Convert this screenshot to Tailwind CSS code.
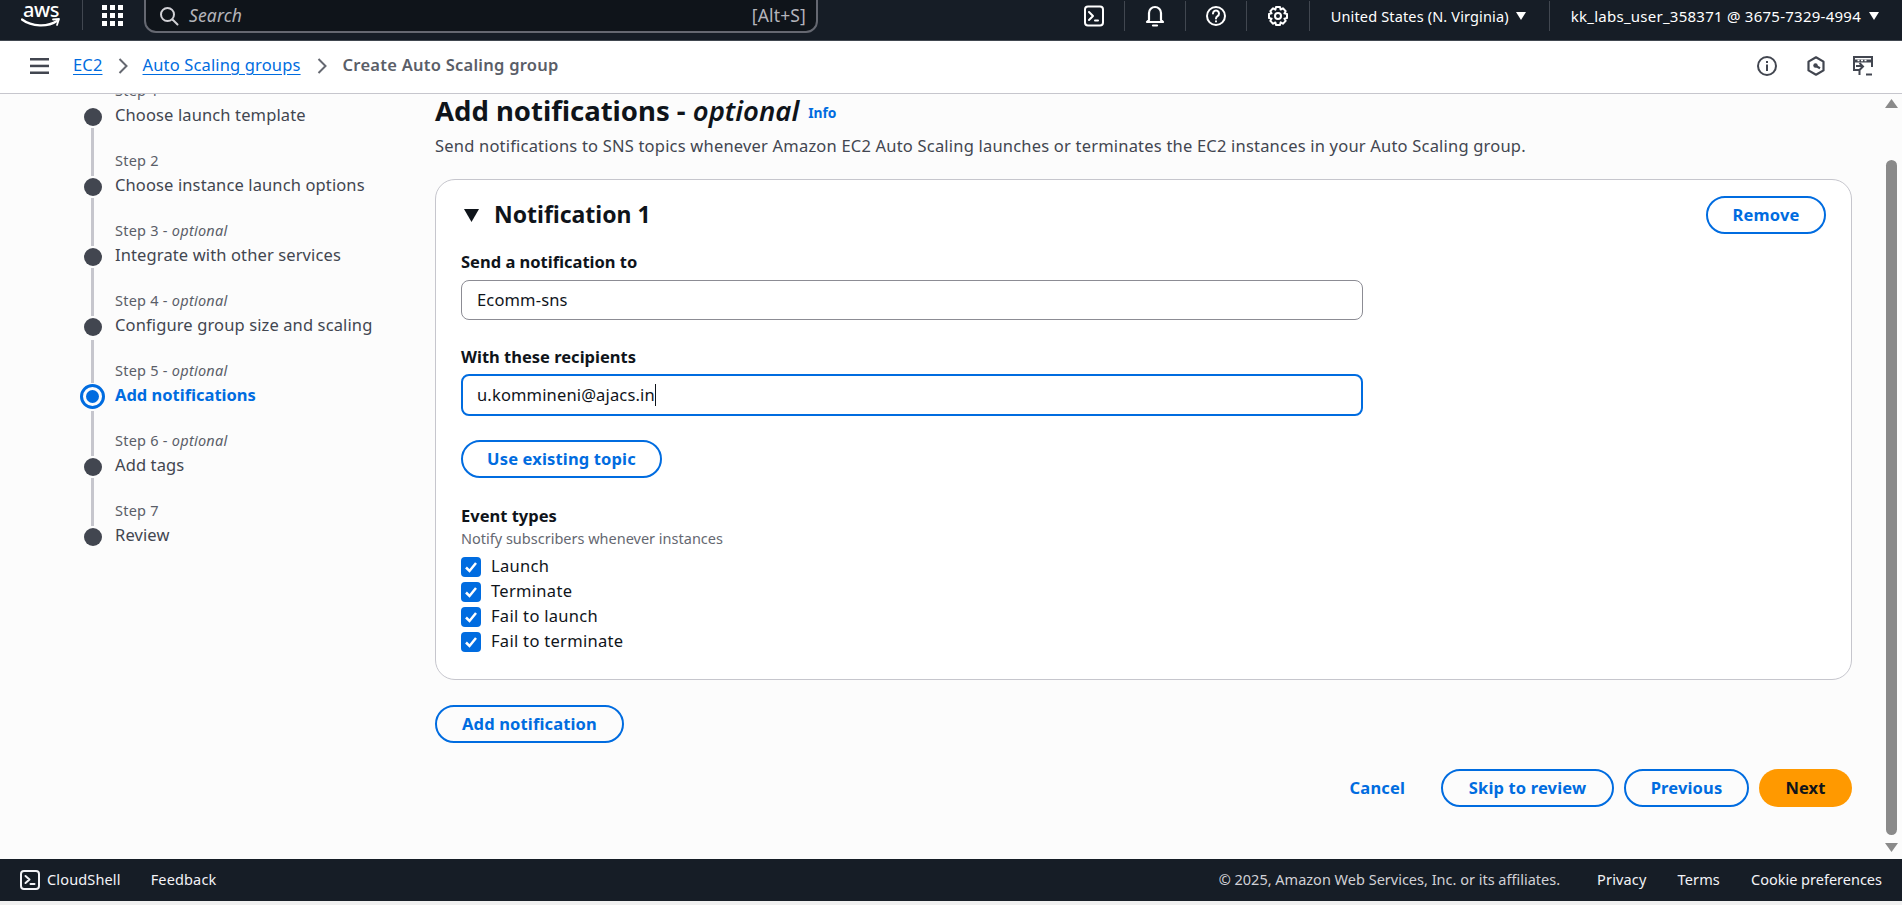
<!doctype html>
<html lang="en">
<head>
<meta charset="utf-8">
<title>Create Auto Scaling group</title>
<script src="https://cdn.jsdelivr.net/npm/@tailwindcss/browser@4"></script>
</head>
<body class="overflow-hidden">
<div class="flex h-[905px] flex-col bg-[#f0f0f0] font-['Noto_Sans',sans-serif] text-[16.5px] tracking-[0.15px] text-[#0f141a]">

  <!-- top nav -->
  <header class="flex h-[41px] shrink-0 items-start overflow-hidden border-b border-[#414750] bg-[#161d26] text-white">
    <div class="relative ml-[21px] h-[40px] w-[40px] shrink-0">
      <span class="block text-center text-[20px] font-medium leading-[20px] tracking-[-0.5px]">aws</span>
      <svg class="absolute left-0 top-[18px]" width="40" height="10" viewBox="0 0 40 10" fill="none"><path d="M1 1.500C11 9 27 9 36 3" stroke="#fff" stroke-width="2.200" stroke-linecap="round"/><path d="M32 1.500l6-.5-2 6" stroke="#fff" stroke-width="1.800" stroke-linecap="round" stroke-linejoin="round"/></svg>
    </div>
    <div class="ml-[21px] h-[30px] w-px bg-[#414750]"></div>
    <svg class="ml-[19px] mt-[5px] shrink-0" width="21" height="21" viewBox="0 0 21 21" fill="#fff"><rect width="5" height="5"/><rect x="8" width="5" height="5"/><rect x="16" width="5" height="5"/><rect y="8" width="5" height="5"/><rect x="8" y="8" width="5" height="5"/><rect x="16" y="8" width="5" height="5"/><rect y="16" width="5" height="5"/><rect x="8" y="16" width="5" height="5"/><rect x="16" y="16" width="5" height="5"/></svg>
    <div class="-mt-[8px] ml-[21px] flex h-[41px] w-[674px] shrink-0 items-center rounded-b-[12px] border-2 border-[#656871] bg-[#0f141a] pl-[13px] pr-[10px] pt-[6px] text-[#b4b4bb]">
      <svg width="20" height="20" viewBox="0 0 20 20" fill="none" stroke="#d1d1d6" stroke-width="2" stroke-linecap="round"><circle cx="8.500" cy="8.500" r="6.500"/><path d="M13.500 13.500l5 5"/></svg>
      <span class="ml-[10px] text-[17.5px] italic">Search</span>
      <span class="ml-auto text-[17.5px]">[Alt+S]</span>
    </div>
    <div class="ml-auto flex h-[32px] items-center">
      <svg class="mr-[20px]" width="20" height="22" viewBox="0 0 20 22" fill="none" stroke="#fff" stroke-width="2" stroke-linecap="round" stroke-linejoin="round"><rect x="1" y="1.500" width="18" height="19" rx="3"/><path d="M5 7l4 4-4 4M11 15.500h3"/></svg>
      <div class="h-[30px] w-px bg-[#414750]"></div>
      <svg class="mx-[20px]" width="20" height="22" viewBox="0 0 20 22" fill="none" stroke="#fff" stroke-width="2.200" stroke-linejoin="round"><path d="M4 15V8a6 6 0 0 1 12 0v7l2 2H2z"/><path d="M8 20.500h4" stroke-linecap="round"/></svg>
      <div class="h-[30px] w-px bg-[#414750]"></div>
      <svg class="mx-[20px]" width="20" height="20" viewBox="0 0 20 20" fill="none" stroke="#fff" stroke-width="2" stroke-linecap="round"><circle cx="10" cy="10" r="9"/><path d="M7 7.500a3 3 0 1 1 4.500 2.600c-1 .6-1.500 1.100-1.500 2.400"/><path d="M10 15.200v.3"/></svg>
      <div class="h-[30px] w-px bg-[#414750]"></div>
      <svg class="mx-[21px]" width="20" height="20" viewBox="0 0 20 20" fill="none" stroke="#fff" stroke-width="2" stroke-linejoin="round"><path d="M8 1h4l.6 2.600 2.300-1.300 2.800 2.800-1.300 2.300L19 8v4l-2.600.6 1.300 2.300-2.800 2.800-2.300-1.300L12 19H8l-.6-2.600-2.300 1.300-2.800-2.800 1.300-2.300L1 12V8l2.600-.6-1.300-2.300 2.800-2.800 2.300 1.300z"/><circle cx="10" cy="10" r="3"/></svg>
      <div class="h-[30px] w-px bg-[#414750]"></div>
      <span class="ml-[21px] text-[14.5px] leading-[20px]">United States (N. Virginia)</span>
      <svg class="ml-[7px]" width="10" height="8" viewBox="0 0 10 8" fill="#fff"><path d="M0 0h10L5 8z"/></svg>
      <div class="ml-[23px] h-[30px] w-px bg-[#414750]"></div>
      <span class="ml-[21px] text-[15px] leading-[20px] tracking-[0.25px]">kk_labs_user_358371 @ 3675-7329-4994</span>
      <svg class="ml-[8px] mr-[23px]" width="10" height="8" viewBox="0 0 10 8" fill="#fff"><path d="M0 0h10L5 8z"/></svg>
    </div>
  </header>

  <!-- breadcrumb bar -->
  <nav class="flex h-[53px] shrink-0 items-center border-b border-[#c6c6cd] bg-white pb-[3px] text-[#424650]">
    <svg class="ml-[30px]" width="19" height="16" viewBox="0 0 19 16" fill="#424650"><rect width="19" height="2.500"/><rect y="6.700" width="19" height="2.500"/><rect y="13.500" width="19" height="2.500"/></svg>
    <a class="ml-[24px] text-[#006ce0] underline underline-offset-[3px]">EC2</a>
    <svg class="mx-[15px]" width="10" height="18" viewBox="0 0 10 18" fill="none" stroke="#656871" stroke-width="2"><path d="M1.500 2l7 7-7 7"/></svg>
    <a class="text-[#006ce0] underline underline-offset-[3px]">Auto Scaling groups</a>
    <svg class="mx-[16px]" width="10" height="18" viewBox="0 0 10 18" fill="none" stroke="#656871" stroke-width="2"><path d="M1.500 2l7 7-7 7"/></svg>
    <span class="font-semibold tracking-[0.25px] text-[#5a5e68]">Create Auto Scaling group</span>
    <svg class="ml-auto" width="20" height="20" viewBox="0 0 20 20" fill="none" stroke="#424650" stroke-width="2"><circle cx="10" cy="10" r="9"/><path d="M10 8.500V15M10 5v2"/></svg>
    <svg class="ml-[30px]" width="18" height="20" viewBox="0 0 18 20" fill="none" stroke="#424650" stroke-width="2.200" stroke-linejoin="round"><path d="M9 1.300l7.500 4.300v8.800L9 18.700 1.500 14.400V5.600z"/><path d="M9 10l4 2.200"/><circle cx="8.500" cy="9.500" r="2.200" fill="#424650" stroke="none"/></svg>
    <svg class="ml-[28px] mr-[29px]" width="20" height="20" viewBox="0 0 20 20" fill="none" stroke="#424650" stroke-width="2"><path d="M6 14H1V1h18v10"/><path d="M1 5h18" stroke-width="3"/><path d="M4.500 4.500h2M8 4.500h2M11.500 4.500h2" stroke="#fff" stroke-width="1.500"/><path d="M3 10h6M6.500 7l3.500 3.500-3.500 3.500v5"/><path d="M13 18.500h6"/></svg>
  </nav>

  <!-- body -->
  <div class="flex min-h-0 flex-1 overflow-hidden bg-[#fcfcfc]">
    <!-- steps -->
    <ol class="-mt-[38px] w-[435px] shrink-0 pl-[80px] tracking-[0.12px]">
      <li class="flex h-[70px]"><div class="flex w-[25px] flex-col items-center justify-end"><span class="size-[18px] rounded-full bg-[#424650]"></span></div><div class="ml-[10px] flex flex-col justify-end"><span class="text-[14.5px] leading-[20px] tracking-[0.25px] text-[#5a5e68]">Step 1</span><span class="mt-[4px] leading-[22px] text-[#424650]">Choose launch template</span></div></li>
      <li class="flex h-[70px]"><div class="flex w-[25px] flex-col items-center justify-end"><span class="mb-[2px] h-[48px] w-[3px] bg-[#c6c6cd]"></span><span class="size-[18px] rounded-full bg-[#424650]"></span></div><div class="ml-[10px] flex flex-col justify-end"><span class="text-[14.5px] leading-[20px] tracking-[0.25px] text-[#5a5e68]">Step 2</span><span class="mt-[4px] leading-[22px] text-[#424650]">Choose instance launch options</span></div></li>
      <li class="flex h-[70px]"><div class="flex w-[25px] flex-col items-center justify-end"><span class="mb-[2px] h-[48px] w-[3px] bg-[#c6c6cd]"></span><span class="size-[18px] rounded-full bg-[#424650]"></span></div><div class="ml-[10px] flex flex-col justify-end"><span class="text-[14.5px] leading-[20px] tracking-[0.25px] text-[#5a5e68]">Step 3 - <i>optional</i></span><span class="mt-[4px] leading-[22px] text-[#424650]">Integrate with other services</span></div></li>
      <li class="flex h-[70px]"><div class="flex w-[25px] flex-col items-center justify-end"><span class="mb-[2px] h-[48px] w-[3px] bg-[#c6c6cd]"></span><span class="size-[18px] rounded-full bg-[#424650]"></span></div><div class="ml-[10px] flex flex-col justify-end"><span class="text-[14.5px] leading-[20px] tracking-[0.25px] text-[#5a5e68]">Step 4 - <i>optional</i></span><span class="mt-[4px] leading-[22px] text-[#424650]">Configure group size and scaling</span></div></li>
      <li class="flex h-[70px]"><div class="flex w-[25px] flex-col items-center justify-end"><span class="mb-[1px] h-[43px] w-[3px] bg-[#c6c6cd]"></span><span class="-mb-[3px] flex size-[25px] items-center justify-center rounded-full border-[3px] border-[#006ce0]"><span class="size-[13px] rounded-full bg-[#006ce0]"></span></span></div><div class="ml-[10px] flex flex-col justify-end"><span class="text-[14.5px] leading-[20px] tracking-[0.25px] text-[#5a5e68]">Step 5 - <i>optional</i></span><span class="mt-[4px] font-bold leading-[22px] tracking-normal text-[#006ce0]">Add notifications</span></div></li>
      <li class="flex h-[70px]"><div class="flex w-[25px] flex-col items-center justify-end"><span class="mb-[2px] h-[45px] w-[3px] bg-[#c6c6cd]"></span><span class="size-[18px] rounded-full bg-[#424650]"></span></div><div class="ml-[10px] flex flex-col justify-end"><span class="text-[14.5px] leading-[20px] tracking-[0.25px] text-[#5a5e68]">Step 6 - <i>optional</i></span><span class="mt-[4px] leading-[22px] text-[#424650]">Add tags</span></div></li>
      <li class="flex h-[70px]"><div class="flex w-[25px] flex-col items-center justify-end"><span class="mb-[2px] h-[48px] w-[3px] bg-[#c6c6cd]"></span><span class="size-[18px] rounded-full bg-[#424650]"></span></div><div class="ml-[10px] flex flex-col justify-end"><span class="text-[14.5px] leading-[20px] tracking-[0.25px] text-[#5a5e68]">Step 7</span><span class="mt-[4px] leading-[22px] text-[#424650]">Review</span></div></li>
    </ol>

    <!-- main -->
    <main class="w-[1417px] shrink-0 pt-px">
      <div class="flex h-[32px] items-center">
        <h1 class="text-[27.5px] font-bold leading-[38px] tracking-normal">Add notifications - <i class="font-semibold">optional</i></h1>
        <a class="ml-[9px] mt-[4px] text-[13.8px] font-bold tracking-normal text-[#006ce0]">Info</a>
      </div>
      <p class="mt-[9px] leading-[20px] tracking-[0.2px] text-[#424650]">Send notifications to SNS topics whenever Amazon EC2 Auto Scaling launches or terminates the EC2 instances in your Auto Scaling group.</p>

      <section class="mt-[23px] h-[501px] rounded-[20px] border border-[#c6c6cd] bg-white pl-[25px] pr-[25px]">
        <div class="mt-[16px] flex h-[38px] items-center">
          <svg class="ml-[3px]" width="15" height="13" viewBox="0 0 15 13" fill="#0f141a"><path d="M0 0h15L7.500 13z"/></svg>
          <h2 class="-mt-[2px] ml-[15px] text-[23px] font-bold leading-[28px] tracking-normal">Notification 1</h2>
          <button class="ml-auto h-[38px] w-[120px] rounded-full border-2 border-[#006ce0] font-bold text-[#006ce0]">Remove</button>
        </div>
        <label class="mt-[18px] block font-bold leading-[20px] tracking-normal">Send a notification to</label>
        <div class="mt-[8px] flex h-[40px] w-[902px] items-center rounded-[8px] border border-[#8c8c94] pl-[15px]">Ecomm-sns</div>
        <label class="mt-[27px] block font-bold leading-[20px] tracking-normal">With these recipients</label>
        <div class="mt-[7px] flex h-[42px] w-[902px] items-center rounded-[8px] border-2 border-[#006ce0] pl-[14px]">u.kommineni@ajacs.in<span class="h-[22px] w-px bg-[#0f141a]"></span></div>
        <button class="mt-[24px] block h-[38px] w-[201px] rounded-full border-2 border-[#006ce0] font-bold text-[#006ce0]">Use existing topic</button>
        <div class="mt-[28px] font-bold leading-[20px] tracking-normal">Event types</div>
        <div class="mt-[2px] text-[14.5px] leading-[20px] tracking-normal text-[#656871]">Notify subscribers whenever instances</div>
        <ul class="mt-[9px] tracking-[0.3px]">
          <li class="flex h-[25px] items-start gap-[10px] leading-[18px]"><span class="flex size-[20px] items-center justify-center rounded-[4px] bg-[#006ce0]"><svg width="14" height="14" viewBox="0 0 14 14" fill="none" stroke="#fff" stroke-width="2.500"><path d="M2 7.500l3.500 3.500L12 3"/></svg></span>Launch</li>
          <li class="flex h-[25px] items-start gap-[10px] leading-[18px]"><span class="flex size-[20px] items-center justify-center rounded-[4px] bg-[#006ce0]"><svg width="14" height="14" viewBox="0 0 14 14" fill="none" stroke="#fff" stroke-width="2.500"><path d="M2 7.500l3.500 3.500L12 3"/></svg></span>Terminate</li>
          <li class="flex h-[25px] items-start gap-[10px] leading-[18px]"><span class="flex size-[20px] items-center justify-center rounded-[4px] bg-[#006ce0]"><svg width="14" height="14" viewBox="0 0 14 14" fill="none" stroke="#fff" stroke-width="2.500"><path d="M2 7.500l3.500 3.500L12 3"/></svg></span>Fail to launch</li>
          <li class="flex h-[25px] items-start gap-[10px] leading-[18px]"><span class="flex size-[20px] items-center justify-center rounded-[4px] bg-[#006ce0]"><svg width="14" height="14" viewBox="0 0 14 14" fill="none" stroke="#fff" stroke-width="2.500"><path d="M2 7.500l3.500 3.500L12 3"/></svg></span>Fail to terminate</li>
        </ul>
      </section>

      <button class="mt-[25px] block h-[38px] w-[189px] rounded-full border-2 border-[#006ce0] font-bold text-[#006ce0]">Add notification</button>

      <div class="mt-[26px] flex items-center justify-end">
        <button class="mr-[36px] font-bold text-[#006ce0]">Cancel</button>
        <button class="h-[38px] w-[173px] rounded-full border-2 border-[#006ce0] font-bold text-[#006ce0]">Skip to review</button>
        <button class="ml-[10px] h-[38px] w-[125px] rounded-full border-2 border-[#006ce0] font-bold text-[#006ce0]">Previous</button>
        <button class="ml-[10px] h-[38px] w-[93px] rounded-full bg-[#ff9900] font-bold text-[#0f141a]">Next</button>
      </div>
    </main>

    <!-- scrollbar -->
    <div class="ml-auto flex w-[18px] shrink-0 flex-col items-center pl-[1px] pr-[4px] pt-[5px]">
      <svg class="shrink-0" width="13" height="9" viewBox="0 0 13 9" fill="#8a8a8a"><path d="M6.500 0L13 9H0z"/></svg>
      <div class="mt-[52px] h-[675px] w-[11px] shrink-0 rounded-full bg-[#8a8a8a]"></div>
      <svg class="mt-[8px] shrink-0" width="13" height="9" viewBox="0 0 13 9" fill="#8a8a8a"><path d="M0 0h13L6.500 9z"/></svg>
    </div>
  </div>

  <!-- footer -->
  <footer class="flex h-[42px] shrink-0 items-center bg-[#161d26] text-[14.5px] text-[#f3f3f7]">
    <svg class="ml-[20px]" width="20" height="20" viewBox="0 0 20 20" fill="none" stroke="#f3f3f7" stroke-width="2" stroke-linecap="round" stroke-linejoin="round"><rect x="1" y="1" width="18" height="18" rx="3"/><path d="M5.500 6l4 3.500-4 3.500M10.500 14h4"/></svg>
    <span class="ml-[7px]">CloudShell</span>
    <span class="ml-[30px]">Feedback</span>
    <span class="ml-auto tracking-normal text-[#d1d1d6]">© 2025, Amazon Web Services, Inc. or its affiliates.</span>
    <span class="ml-[37px]">Privacy</span>
    <span class="ml-[31px]">Terms</span>
    <span class="ml-[31px] mr-[20px] tracking-normal">Cookie preferences</span>
  </footer>
  <div class="h-[4px] shrink-0 bg-[#f0f0f0]"></div>
</div>
</body>
</html>
